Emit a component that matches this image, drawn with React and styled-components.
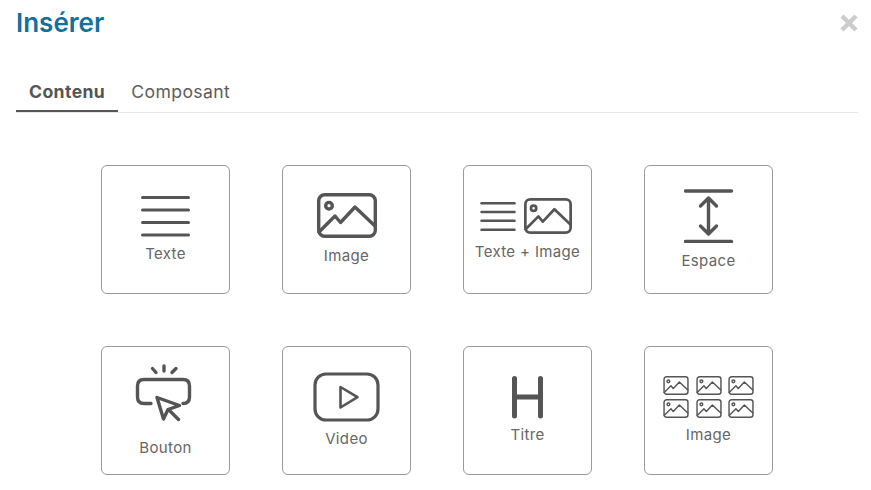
// Insert panel: a title bar, two tabs and a grid of block types
import React from "react";
import styled, { createGlobalStyle } from "styled-components";

const GlobalStyle = createGlobalStyle`
  html, body {
    margin: 0;
    padding: 0;
    background: #fff;
    font-family: Inter, "Liberation Sans", sans-serif;
  }
`;

const ImageGlyph = ({ width = 60, height = 45 }) => (
  <svg width={width} height={height} viewBox="0 0 60 45" fill="none" stroke="#555" strokeWidth="3.4" strokeLinejoin="round" strokeLinecap="round">
    <rect x="1.7" y="1.7" width="56.6" height="41.6" rx="6" />
    <circle cx="12" cy="12.7" r="3.3" />
    <path d="M2 39 L18 23 L23.5 29.5 L38 14 L58 33" />
  </svg>
);

const LinesGlyph = ({ width, height, gap, stroke }) => (
  <svg width={width} height={height} viewBox={`0 0 ${width} ${height}`} fill="none" stroke="#555" strokeWidth={stroke} strokeLinecap="round">
    {[0, 1, 2, 3].map((i) => (
      <line key={i} x1="1.5" x2={width - 1.5} y1={stroke / 2 + i * gap} y2={stroke / 2 + i * gap} />
    ))}
  </svg>
);

const SpaceGlyph = () => (
  <svg width="50" height="54" viewBox="683.5 189 50 54" fill="none" stroke="#555" strokeWidth="3.4" strokeLinecap="round" strokeLinejoin="round">
    <path d="M685 191 H731 M685 241.5 H731" />
    <path d="M708 199 V233 M700 206 L708 198 L716 206 M700 226 L708 234 L716 226" />
  </svg>
);

const ButtonGlyph = () => (
  <svg width="61" height="60" viewBox="135 363 61 60" fill="none" stroke="#555" strokeWidth="3.4" strokeLinecap="round" strokeLinejoin="round">
    <path d="M164 366 V371 M152.5 368.5 L156 372.5 M176 368.5 L172 372.5" />
    <path d="M151 403.5 H144 Q137.5 403.5 137.5 397 V386 Q137.5 379.5 144 379.5 H183 Q189.5 379.5 189.5 386 V397 Q189.5 403.5 183 403.5" />
    <path d="M157 397.5 L179.5 405.5 L168 409.5 L163.5 419 Z" />
    <path d="M169 410 L178.5 419.5" />
  </svg>
);

const VideoGlyph = () => (
  <svg width="69" height="51" viewBox="312 372 69 51" fill="none" stroke="#555" strokeLinejoin="round">
    <rect x="315" y="374" width="63" height="46" rx="11" strokeWidth="3.2" />
    <path d="M340.5 387 L357.5 397.2 L340.5 407.5 Z" strokeWidth="2.6" />
  </svg>
);

const HeadingGlyph = () => (
  <svg width="40" height="44" viewBox="507 375 40 44" fill="none" stroke="#555" strokeWidth="5" strokeLinecap="round">
    <path d="M513.5 378.5 V416 M539.5 378.5 V416 M513.5 397 H539.5" />
  </svg>
);

const TextImage = () => (
  <IconRow>
    <LinesGlyph width={36} height={29} gap={8.8} stroke={2.5} />
    <ImageGlyph width={48} height={36} />
  </IconRow>
);

const Gallery = () => (
  <GalleryGrid>
    {[0, 1, 2, 3, 4, 5].map((i) => (
      <ImageGlyph key={i} width={26} height={19} />
    ))}
  </GalleryGrid>
);

const blocks = [
  { label: "Texte", pad: 30, gap: 8, icon: <LinesGlyph width={49} height={41} gap={12.5} stroke={3} /> },
  { label: "Image", pad: 27, gap: 9, icon: <ImageGlyph /> },
  { label: "Texte + Image", pad: 32, gap: 9, icon: <TextImage /> },
  { label: "Espace", pad: 23, gap: 9, icon: <SpaceGlyph /> },
  { label: "Bouton", pad: 16, gap: 16, icon: <ButtonGlyph /> },
  { label: "Video", pad: 25, gap: 7, icon: <VideoGlyph /> },
  { label: "Titre", pad: 28, gap: 7, icon: <HeadingGlyph /> },
  { label: "Image", pad: 29, gap: 8, icon: <Gallery /> },
];

export default function App() {
  return (
    <Page>
      <GlobalStyle />
      <Header>
        <Title>Insérer</Title>
        <Close aria-label="Fermer">
          <svg width="20" height="20" viewBox="0 0 20 20" fill="none" stroke="#ccc" strokeWidth="4.5">
            <path d="M3 3 L17 17 M17 3 L3 17" />
          </svg>
        </Close>
      </Header>
      <Tabs>
        <Tab $active>Contenu</Tab>
        <Tab>Composant</Tab>
      </Tabs>
      <Grid>
        {blocks.map((b, i) => (
          <Card key={i} $pad={b.pad}>
            {b.icon}
            <Label $gap={b.gap}>{b.label}</Label>
          </Card>
        ))}
      </Grid>
    </Page>
  );
}

const Page = styled.div`
  width: 871px;
  height: 490px;
  overflow: hidden;
  box-sizing: border-box;
  padding: 0 13px 0 16px;
  background: #fff;
`;

const Header = styled.div`
  display: flex;
  align-items: center;
  justify-content: space-between;
  height: 46px;
`;

const Title = styled.h1`
  margin: 0;
  font-size: 26px;
  font-weight: 600;
  line-height: 46px;
  color: #12709d;
`;

const Close = styled.button`
  display: flex;
  margin-right: -1px;
  padding: 0;
  border: none;
  background: none;
  cursor: pointer;
`;

const Tabs = styled.div`
  display: flex;
  margin-top: 25px;
  border-bottom: 1px solid #e8e8e8;
`;

const Tab = styled.div`
  padding: 0 13px;
  height: 41px;
  box-sizing: border-box;
  font-size: 17.6px;
  line-height: 41px;
  letter-spacing: 0.4px;
  font-weight: ${(p) => (p.$active ? 700 : 400)};
  color: ${(p) => (p.$active ? "#555" : "#5c5c5c")};
  border-bottom: 2px solid ${(p) => (p.$active ? "#555" : "transparent")};
`;

const Grid = styled.div`
  display: grid;
  grid-template-columns: repeat(4, 129px);
  grid-auto-rows: 129px;
  gap: 52px;
  margin: 52px 0 0 85px;
`;

const Card = styled.div`
  display: flex;
  flex-direction: column;
  align-items: center;
  box-sizing: border-box;
  padding-top: ${(p) => p.$pad}px;
  border: 1px solid #999;
  border-radius: 6px;
  background: #fff;
`;

const Label = styled.span`
  margin-top: ${(p) => p.$gap}px;
  font-size: 15px;
  line-height: 17px;
  letter-spacing: 0.35px;
  white-space: nowrap;
  color: #666;
`;

const IconRow = styled.div`
  display: flex;
  align-items: center;
  gap: 8px;
  margin-right: 3px;
`;

const GalleryGrid = styled.div`
  display: grid;
  grid-template-columns: repeat(3, 26px);
  column-gap: 6.5px;
  row-gap: 4px;
  line-height: 0;
`;
